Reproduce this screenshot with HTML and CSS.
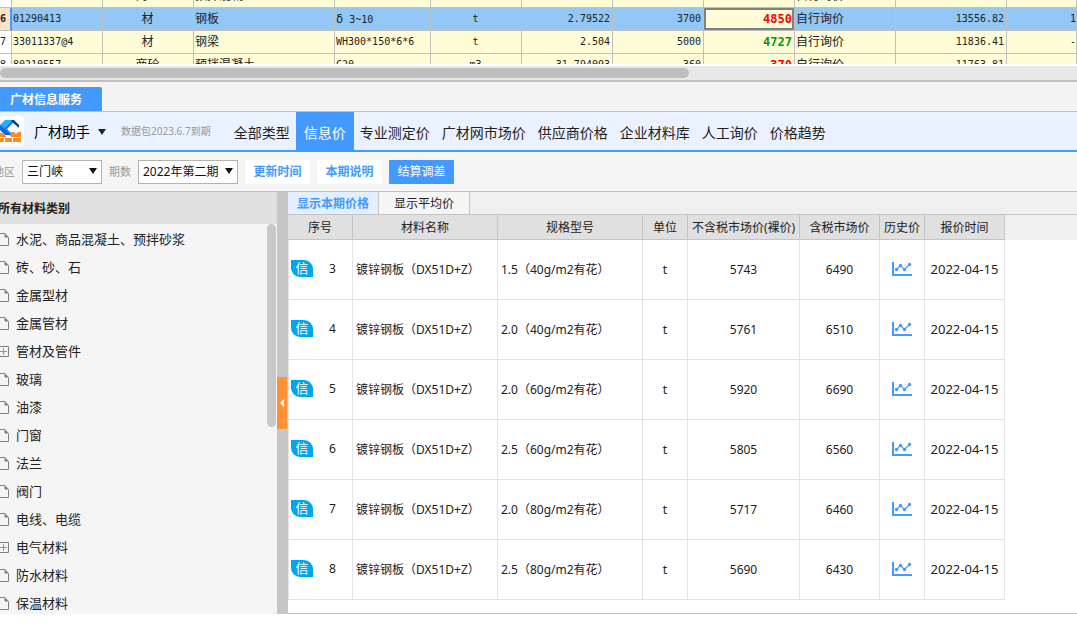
FILE: index.html
```html
<!DOCTYPE html>
<html lang="zh-CN">
<head>
<meta charset="utf-8">
<title>广材信息服务</title>
<link rel="stylesheet" href="styles.css">
</head>
<body>
<svg class="defs" aria-hidden="true">
  <symbol id="doc" viewBox="0 0 9 13"><path d="M0 .5H5L8.500 4.500V12.500H0" fill="none" stroke="#808080"/><path d="M4.500 .5V4.500H8.500Z" fill="#808080"/></symbol>
  <symbol id="plus" viewBox="0 0 9 13"><path d="M0 1.500H8.500V11.500H0" fill="none" stroke="#808080"/><path d="M0 6.500H7M3.500 3V10" fill="none" stroke="#35b6dd"/></symbol>
  <symbol id="chart" viewBox="0 0 20 14"><path d="M1 0V13H20" fill="none" stroke="#4499ff" stroke-width="2"/><path d="M4.500 7.500L8.500 3.500L12.500 7.500L17.500 2.500" fill="none" stroke="#4499ff" stroke-width="1.200"/><g fill="#4499ff"><circle cx="4.500" cy="7.500" r="1.700"/><circle cx="8.500" cy="3.500" r="1.700"/><circle cx="12.500" cy="7.500" r="1.700"/><circle cx="17.500" cy="2.500" r="1.700"/></g></symbol>
</svg>

<section class="sheet">
  <table class="grid">
    <colgroup><col class="g-no"><col class="g-91"><col class="g-91"><col class="g-141"><col class="g-96"><col class="g-91"><col class="g-91"><col class="g-91"><col class="g-91"><col class="g-101"><col class="g-111"><col></colgroup>
    <tbody>
    <tr><th></th><td></td><td class="mid cn">商砼</td><td class="cn">预拌混凝土</td><td></td><td></td><td></td><td></td><td></td><td class="cn">自行询价</td><td></td><td></td></tr>
    <tr class="selected"><th>6</th><td>01290413</td><td class="mid cn">材</td><td class="cn">钢板</td><td><span class="cn">δ</span> 3~10</td><td class="mid">t</td><td class="num">2.79522</td><td class="num">3700</td><td class="num up focus">4850</td><td class="cn">自行询价</td><td class="num">13556.82</td><td class="edge">1</td></tr>
    <tr><th>7</th><td>33011337@4</td><td class="mid cn">材</td><td class="cn">钢梁</td><td>WH300*150*6*6</td><td class="mid">t</td><td class="num">2.504</td><td class="num">5000</td><td class="num down">4727</td><td class="cn">自行询价</td><td class="num">11836.41</td><td class="edge">-</td></tr>
    <tr><th>8</th><td>80210557</td><td class="mid cn">商砼</td><td class="cn">预拌混凝土</td><td>C20</td><td class="mid">m3</td><td class="num">31.794093</td><td class="num">360</td><td class="num up">370</td><td class="cn">自行询价</td><td class="num">11763.81</td><td></td></tr>
    </tbody>
  </table>
</section>
<div class="hscroll"><div class="hthumb"></div></div>

<div class="dock"><button class="dock-tab">广材信息服务</button></div>

<header class="bar">
  <svg class="logo" viewBox="0 0 24 30">
    <path d="M0 0H20Q24 0 24 4V26Q24 30 20 30H0Z" fill="#fff"/>
    <path d="M5 4H12L4 12H0V9Z" fill="#1fb0fa"/>
    <path d="M0 9L4 12L11 19H5L0 14Z" fill="#0d62e0"/>
    <path d="M4 12L12 4L14 6L7 13L12 18L10 20Z" fill="#1a7df0"/>
    <path d="M11 4H14L19 9V12L12 6Z" fill="#0b3f94"/>
    <path d="M0 17H3L6 20V21H0ZM11 16H14L16 18L18 16H21V21H11ZM0 22H4V26H0ZM5 22H12V26H5ZM13 22H21V26H13Z" fill="#ff8a1e"/>
  </svg>
  <button class="app">广材助手 <i class="caret"></i></button>
  <span class="expiry">数据包2023.6.7到期</span>
  <nav class="menu">
    <a href="#">全部类型</a><a href="#" class="active">信息价</a><a href="#">专业测定价</a><a href="#">广材网市场价</a><a href="#">供应商价格</a><a href="#">企业材料库</a><a href="#">人工询价</a><a href="#">价格趋势</a>
  </nav>
</header>

<form class="filters">
  <label class="area" for="region">地区</label>
  <span class="pick pick-region"><select id="region"><option>三门峡</option></select></span>
  <label for="period">期数</label>
  <span class="pick pick-period"><select id="period"><option>2022年第二期</option></select></span>
  <button type="button">更新时间</button>
  <button type="button">本期说明</button>
  <button type="button" class="primary">结算调差</button>
</form>

<main class="main">
  <aside class="side">
    <h2>所有材料类别</h2>
    <div class="tree">
      <ul>
        <li><svg><use href="#doc"/></svg>水泥、商品混凝土、预拌砂浆</li>
        <li><svg><use href="#doc"/></svg>砖、砂、石</li>
        <li><svg><use href="#doc"/></svg>金属型材</li>
        <li><svg><use href="#doc"/></svg>金属管材</li>
        <li><svg><use href="#plus"/></svg>管材及管件</li>
        <li><svg><use href="#doc"/></svg>玻璃</li>
        <li><svg><use href="#doc"/></svg>油漆</li>
        <li><svg><use href="#doc"/></svg>门窗</li>
        <li><svg><use href="#doc"/></svg>法兰</li>
        <li><svg><use href="#doc"/></svg>阀门</li>
        <li><svg><use href="#doc"/></svg>电线、电缆</li>
        <li><svg><use href="#plus"/></svg>电气材料</li>
        <li><svg><use href="#doc"/></svg>防水材料</li>
        <li><svg><use href="#doc"/></svg>保温材料</li>
      </ul>
      <div class="vthumb"></div>
    </div>
  </aside>
  <div class="splitter"><button class="fold" aria-label="收起"><i></i></button></div>
  <section class="prices">
    <div class="tabs"><button class="on">显示本期价格</button><button>显示平均价</button></div>
    <div class="table-wrap">
    <table class="list">
      <colgroup><col class="c-65"><col class="c-145"><col class="c-145"><col class="c-45"><col class="c-112"><col class="c-80"><col class="c-45"><col class="c-80"></colgroup>
      <thead><tr><th>序号</th><th>材料名称</th><th>规格型号</th><th>单位</th><th>不含税市场价(裸价)</th><th>含税市场价</th><th>历史价</th><th>报价时间</th></tr></thead>
      <tbody>
      <tr><td><div class="seq"><b>信</b>3</div></td><td class="left">镀锌钢板（DX51D+Z）</td><td class="left">1.5（40g/m2有花）</td><td>t</td><td>5743</td><td>6490</td><td><svg class="chart"><use href="#chart"/></svg></td><td class="date">2022-04-15</td></tr>
      <tr><td><div class="seq"><b>信</b>4</div></td><td class="left">镀锌钢板（DX51D+Z）</td><td class="left">2.0（40g/m2有花）</td><td>t</td><td>5761</td><td>6510</td><td><svg class="chart"><use href="#chart"/></svg></td><td class="date">2022-04-15</td></tr>
      <tr><td><div class="seq"><b>信</b>5</div></td><td class="left">镀锌钢板（DX51D+Z）</td><td class="left">2.0（60g/m2有花）</td><td>t</td><td>5920</td><td>6690</td><td><svg class="chart"><use href="#chart"/></svg></td><td class="date">2022-04-15</td></tr>
      <tr><td><div class="seq"><b>信</b>6</div></td><td class="left">镀锌钢板（DX51D+Z）</td><td class="left">2.5（60g/m2有花）</td><td>t</td><td>5805</td><td>6560</td><td><svg class="chart"><use href="#chart"/></svg></td><td class="date">2022-04-15</td></tr>
      <tr><td><div class="seq"><b>信</b>7</div></td><td class="left">镀锌钢板（DX51D+Z）</td><td class="left">2.0（80g/m2有花）</td><td>t</td><td>5717</td><td>6460</td><td><svg class="chart"><use href="#chart"/></svg></td><td class="date">2022-04-15</td></tr>
      <tr><td><div class="seq"><b>信</b>8</div></td><td class="left">镀锌钢板（DX51D+Z）</td><td class="left">2.5（80g/m2有花）</td><td>t</td><td>5690</td><td>6430</td><td><svg class="chart"><use href="#chart"/></svg></td><td class="date">2022-04-15</td></tr>
      </tbody>
    </table>
    </div>
  </section>
</main>
</body>
</html>
```
FILE: styles.css
```css
* { box-sizing: border-box; }
body {
  margin: 0;
  height: 100vh;
  display: flex;
  flex-direction: column;
  overflow: hidden;
  background: #fff;
  color: #222;
  font: 12px/16px "Noto Sans", "Noto Sans CJK SC", sans-serif;
}
button, select { font: inherit; color: inherit; border: 0; border-radius: 0; padding: 0; background: none; }
.defs { position: absolute; width: 0; height: 0; }

/* Bill of materials */
.sheet { height: 66px; flex: none; overflow: hidden; border-bottom: 2px solid #fff; }
.grid {
  width: 100%;
  margin-top: -15px;
  table-layout: fixed;
  border-collapse: separate;
  border-spacing: 0;
  font: 10px/20px "DejaVu Sans Mono", "Noto Sans CJK SC", monospace;
}
.grid th, .grid td {
  height: 23px;
  padding: 0 2px;
  border-right: 1px solid #c0c0c0;
  border-bottom: 1px solid #c0c0c0;
  background: #fffcd8;
  white-space: nowrap;
  overflow: hidden;
  text-align: left;
}
.grid th { padding: 0; background: #fff; font-weight: 400; }
.grid td { padding-left: 1px; }
.grid .cn { font-size: 12px; }
.grid .mid { text-align: center; }
.grid .num { text-align: right; }
.grid .edge { text-align: right; padding: 0; }
.grid .selected td { background: #93c8f6; }
.grid .selected th { background: #fde4c8; border-right: 2px solid #4499ff; font-weight: 700; }
.grid .up, .grid .down { font-size: 12px; font-weight: 700; }
.grid .up { color: #f00; }
.grid .down { color: #0a9a0a; }
.grid .selected .focus { background: #fffcd8; box-shadow: inset 0 0 0 2px #808080; }
.g-no { width: 12px; }
.g-91 { width: 91px; }
.g-96 { width: 96px; }
.g-101 { width: 101px; }
.g-111 { width: 111px; }
.g-141 { width: 141px; }

.hscroll { flex: none; height: 16px; padding: 2px 0; background: #e8e8e8; border-bottom: 2px solid #c0c0c0; }
.hthumb { width: 64%; height: 10px; border-radius: 5px; background: #bfbfbf; }

/* Dock tab */
.dock { flex: none; height: 30px; padding-top: 5px; background: #f4f4f4; border-bottom: 1px solid #c0c0c0; }
.dock-tab { height: 24px; padding: 2px 20px 0 10px; background: #4499ff; color: #fff; font-weight: 700; border-radius: 0 2px 0 0; display: block; }

/* Assistant bar */
.bar { flex: none; height: 40px; display: flex; align-items: center; background: #ebf2ff; border-bottom: 2px solid #4499ff; }
.logo { width: 24px; height: 30px; flex: none; }
.app { display: flex; align-items: center; gap: 8px; margin-left: 10px; padding-top: 2px; font-size: 14px; line-height: 20px; color: #000; }
.caret { border: 4px solid transparent; border-top: 6px solid #222; border-bottom: 0; }
.expiry { margin-left: 15px; font-size: 10px; color: #999; white-space: nowrap; }
.menu { display: flex; height: 38px; margin-left: 17px; }
.menu a { padding: 0 6px; font-size: 14px; line-height: 42px; color: #222; text-decoration: none; white-space: nowrap; }
.menu .active { padding: 0 8px; background: #4499ff; color: #fff; }

/* Filters */
.filters { flex: none; height: 40px; display: flex; align-items: center; gap: 7px; background: #f5f5f5; border-bottom: 1px solid #c0c0c0; }
.filters label { font-size: 11px; color: #999; }
.filters .area { margin-left: -7px; }
.pick { position: relative; height: 24px; }
.pick::after { content: ""; position: absolute; right: 5px; top: 8px; border: 4px solid transparent; border-top: 6px solid #111; border-bottom: 0; pointer-events: none; }
.pick select { appearance: none; width: 100%; height: 24px; padding: 0 4px; background: #fff; border: 1px solid #b4b4b4; color: #111; }
.pick-region { width: 80px; }
.pick-period { width: 100px; }
.filters button { height: 24px; width: 65px; background: #fff; color: #4499ff; font-weight: 700; }
.filters .primary { background: #4499ff; color: #fff; font-weight: 400; }

/* Main area */
.main { flex: 1; min-height: 0; display: flex; margin-bottom: 9px; }
.side { width: 277px; flex: none; display: flex; flex-direction: column; background: #f5f5f5; }
.side h2 { flex: none; margin: 0; height: 32px; padding-top: 1px; font-size: 12px; line-height: 32px; background: #e0e0e0; text-indent: -2px; }
.tree { flex: 1; min-height: 0; display: flex; justify-content: space-between; overflow: hidden; padding-right: 1px; }
.tree ul { margin: 0; padding: 1px 0 0; list-style: none; }
.tree li { height: 28px; display: flex; align-items: center; gap: 7px; font-size: 13px; }
.tree svg { width: 9px; height: 13px; }
.vthumb { width: 9px; height: 52%; border-radius: 5px; background: #c8c8c8; }
.splitter { width: 11px; flex: none; display: flex; align-items: center; background: #c8c6c4; padding-right: 1px; }
.fold { width: 10px; height: 52px; display: flex; align-items: center; justify-content: center; background: #ff9234; }
.fold i { border: 4px solid transparent; border-right: 4px solid #fff; border-left: 0; }

.prices { flex: 1; min-width: 0; display: flex; flex-direction: column; border-bottom: 1px solid #c0c0c0; }
.tabs { flex: none; height: 23px; display: flex; background: #f0f0f0; border-bottom: 1px solid #c4c4c4; }
.tabs button { width: 91px; padding-top: 2px; border-right: 1px solid #c4c4c4; background: #f5f5f5; }
.tabs .on { background: #e3efff; color: #4499ff; font-weight: 700; }
.table-wrap { flex: 1; min-height: 0; overflow: hidden; background: linear-gradient(#f0f0f0 25px, #fff 25px); }
.list { width: 717px; table-layout: fixed; border-collapse: separate; border-spacing: 0; background: #fff; }
.list th { height: 25px; padding: 2px 0 0; background: #e0e0e0; border-right: 1px solid #c4c4c4; border-bottom: 1px solid #c4c4c4; font-weight: 400; white-space: nowrap; }
.list td { height: 60px; padding: 0; border-right: 1px solid #e4e4e4; border-bottom: 1px solid #e4e4e4; text-align: center; white-space: nowrap; }
.list td:first-child { border-left: 1px solid #e4e4e4; padding-bottom: 2px; }
.list .left { text-align: left; padding-left: 3px; }
.list .date { font-size: 13px; padding-bottom: 2px; }
.seq { display: flex; align-items: center; gap: 16px; padding-left: 2px; }
.seq b { width: 22px; height: 17px; border-radius: 0 9px 0 9px; background: #00a5f0; color: #fff; font-size: 13px; font-weight: 400; }
.chart { width: 20px; height: 14px; display: block; margin: 0 auto 2px; }
.c-45 { width: 45px; }
.c-65 { width: 65px; }
.c-80 { width: 80px; }
.c-112 { width: 112px; }
.c-145 { width: 145px; }
```
